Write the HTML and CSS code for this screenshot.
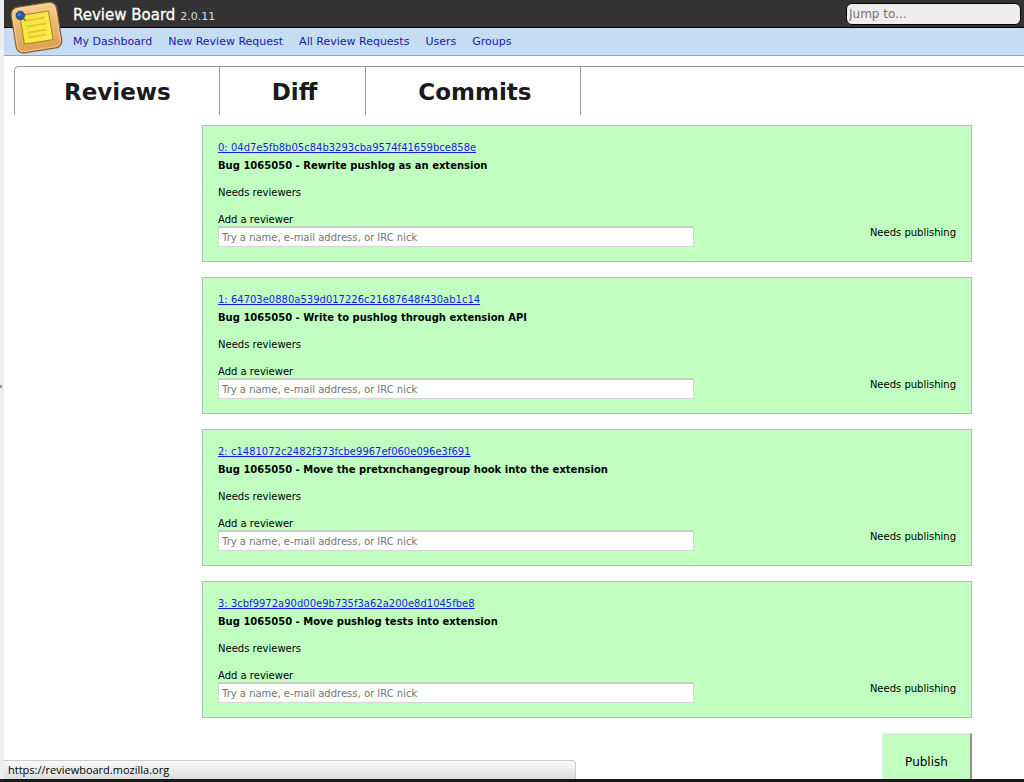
FILE: index.html
```html
<!DOCTYPE html>
<html lang="en">
<head>
<meta charset="utf-8">
<meta name="viewport" content="width=device-width, initial-scale=1">
<title>Review Board</title>
<link rel="stylesheet" href="styles.css">
</head>
<body>
<div class="window">
  <div class="splitter"><span class="splitter-grip"></span></div>
  <div class="page">
    <header class="header">
      <div class="topbar">
        <a class="brand" href="#">Review Board <span class="version">2.0.11</span></a>
        <input class="search" type="text" placeholder="Jump to..." aria-label="Jump to">
      </div>
      <nav class="nav">
        <a href="#">My Dashboard</a>
        <a href="#">New Review Request</a>
        <a href="#">All Review Requests</a>
        <a href="#">Users</a>
        <a href="#">Groups</a>
      </nav>
      <svg class="logo" viewBox="0 0 56 56" aria-hidden="true">
        <defs>
          <linearGradient id="board" x1="0" y1="0" x2="0" y2="1"><stop offset="0" stop-color="#f6cf8c"/><stop offset="1" stop-color="#dc9f51"/></linearGradient>
          <linearGradient id="note" x1="0" y1="0" x2="1" y2="1"><stop offset="0" stop-color="#f3e13c"/><stop offset="1" stop-color="#fff04e"/></linearGradient>
        </defs>
        <g transform="rotate(-9 28 28)">
          <rect x="4.500" y="4.500" width="46" height="46" rx="7" fill="url(#board)" stroke="#8d5f2c" stroke-width="1.300"/>
          <rect x="5.800" y="5.800" width="43.400" height="43.400" rx="6" fill="none" stroke="#fbdca6" stroke-opacity=".7"/>
          <rect x="13" y="13" width="29" height="29" fill="url(#note)" stroke="#a98222"/>
          <path d="M19 19h18M18 25h20M18 31h19M18 36h18" stroke="#dfc52f" stroke-width="1.800" fill="none"/>
          <path d="M15 15l3 4" stroke="#7d7325" stroke-width="1.500"/>
          <circle cx="13.500" cy="13" r="4.300" fill="#285ba5" stroke="#1c4380" stroke-width=".8"/>
          <circle cx="12.500" cy="12" r="1.500" fill="#4d82c8"/>
        </g>
      </svg>
    </header>

    <nav class="tabs">
      <a class="tab" href="#">Reviews</a>
      <a class="tab" href="#">Diff</a>
      <a class="tab" href="#">Commits</a>
    </nav>

    <main class="commits">
      <section class="commit">
        <div class="details">
          <a class="hash" href="#">0: 04d7e5fb8b05c84b3293cba9574f41659bce858e</a>
          <h2 class="summary">Bug 1065050 - Rewrite pushlog as an extension</h2>
          <p class="state">Needs reviewers</p>
          <label class="label" for="r0">Add a reviewer</label>
          <input class="reviewer" id="r0" type="text" placeholder="Try a name, e-mail address, or IRC nick">
        </div>
        <p class="status">Needs publishing</p>
      </section>
      <section class="commit">
        <div class="details">
          <a class="hash" href="#">1: 64703e0880a539d017226c21687648f430ab1c14</a>
          <h2 class="summary">Bug 1065050 - Write to pushlog through extension API</h2>
          <p class="state">Needs reviewers</p>
          <label class="label" for="r1">Add a reviewer</label>
          <input class="reviewer" id="r1" type="text" placeholder="Try a name, e-mail address, or IRC nick">
        </div>
        <p class="status">Needs publishing</p>
      </section>
      <section class="commit">
        <div class="details">
          <a class="hash" href="#">2: c1481072c2482f373fcbe9967ef060e096e3f691</a>
          <h2 class="summary">Bug 1065050 - Move the pretxnchangegroup hook into the extension</h2>
          <p class="state">Needs reviewers</p>
          <label class="label" for="r2">Add a reviewer</label>
          <input class="reviewer" id="r2" type="text" placeholder="Try a name, e-mail address, or IRC nick">
        </div>
        <p class="status">Needs publishing</p>
      </section>
      <section class="commit">
        <div class="details">
          <a class="hash" href="#">3: 3cbf9972a90d00e9b735f3a62a200e8d1045fbe8</a>
          <h2 class="summary">Bug 1065050 - Move pushlog tests into extension</h2>
          <p class="state">Needs reviewers</p>
          <label class="label" for="r3">Add a reviewer</label>
          <input class="reviewer" id="r3" type="text" placeholder="Try a name, e-mail address, or IRC nick">
        </div>
        <p class="status">Needs publishing</p>
      </section>
      <button class="publish" type="button">Publish</button>
    </main>
    <div class="link-status">https://reviewboard.mozilla.org</div>
  </div>
</div>
</body>
</html>
```
FILE: styles.css
```css
* { box-sizing: border-box; }

body {
  margin: 0;
  background: #fff;
  color: #000;
  font: 10px/14px Verdana, "DejaVu Sans", sans-serif;
}

.window {
  display: flex;
  height: 100vh;
  overflow: hidden;
  border-bottom: 3px solid #161a1a;
}

.splitter {
  flex: none;
  display: flex;
  align-items: center;
  width: 4px;
  padding-bottom: 6px;
  background: #eee;
}

.splitter-grip {
  width: 2px;
  height: 3px;
  background: #999;
}

.page {
  position: relative;
  flex: 1;
  min-width: 0;
  overflow: hidden;
}

.header { position: relative; }

.topbar {
  display: flex;
  align-items: center;
  justify-content: space-between;
  height: 28px;
  padding: 1px 3px 0 69px;
  background: #333;
  border-bottom: 1px solid #000;
}

.brand {
  padding-top: 3px;
  color: #fff;
  font-size: 15px;
  line-height: 24px;
  text-decoration: none;
  -webkit-text-stroke: 0.3px #fff;
}

.version {
  color: #ddd;
  font-size: 11px;
  -webkit-text-stroke: 0;
}

.search {
  width: 175px;
  height: 22px;
  padding: 0 2px;
  border: 1px solid #000;
  border-radius: 6px;
  background: #eee;
  font: 12px Verdana, "DejaVu Sans", sans-serif;
}

.search::placeholder,
.reviewer::placeholder {
  color: #757575;
  opacity: 1;
}

.nav {
  display: flex;
  align-items: center;
  gap: 16px;
  height: 28px;
  padding-left: 69px;
  background: #c6dcf3;
  border-bottom: 1px solid #8aa6cc;
  font-size: 11px;
}

.nav a {
  color: #1a1aa6;
  text-decoration: none;
}

.logo {
  position: absolute;
  top: 0;
  left: 5px;
  width: 56px;
  height: 56px;
}

.tabs {
  display: flex;
  height: 49px;
  margin: 10px 0 10px 10px;
  border-top: 1px solid #999;
  border-left: 1px solid #999;
  border-top-left-radius: 5px;
}

.tab {
  padding: 0 48px 0 52px;
  border-right: 1px solid #999;
  color: #1a1a1a;
  font-size: 23px;
  font-weight: bold;
  line-height: 50px;
  text-decoration: none;
}

.tab:first-child { padding-left: 49px; }

.commits {
  display: flex;
  flex-direction: column;
  gap: 15px;
  margin: 0 52px 0 198px;
}

.commit {
  display: flex;
  align-items: flex-end;
  justify-content: space-between;
  padding: 15px 15px 14px;
  border: 1px solid #b0bfb0;
  background: #c1ffc1;
}

.details {
  display: flex;
  flex-direction: column;
  align-items: flex-start;
  flex: 0 1 476px;
}

.hash { color: #1a1aee; }

.summary {
  margin: 4px 0 13px;
  font-size: 10px;
  line-height: 14px;
}

.state { margin: 0 0 13px; }

.label { line-height: 13px; }

.reviewer {
  width: 100%;
  height: 21px;
  padding: 0 3px;
  border: 1px solid #d4d4d4;
  border-top: 2px solid #ccc;
  background: #fff;
  font: 10px "Lucida Grande", "DejaVu Sans", sans-serif;
}

.status { margin: 0 0 7px; }

.publish {
  align-self: flex-end;
  width: 90px;
  height: 58px;
  padding: 0;
  border: 1px solid #e4eee4;
  border-right: 2px solid #909090;
  border-bottom: 2px solid #909090;
  background: #c1ffc1;
  color: #000;
  font: 12px Verdana, "DejaVu Sans", sans-serif;
}

.link-status {
  position: absolute;
  bottom: 0;
  left: 0;
  width: 572px;
  max-width: 100%;
  height: 19px;
  padding-left: 4px;
  border: 1px solid #ccc;
  border-width: 1px 1px 0 0;
  border-top-right-radius: 4px;
  background: linear-gradient(#fafafa, #ddd);
  font: 11px/18px "Lucida Grande", "Open Sans", sans-serif;
}
```
